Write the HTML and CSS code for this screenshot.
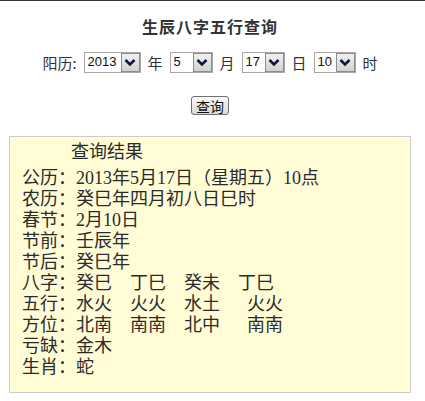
FILE: index.html
```html
<!DOCTYPE html>
<html lang="zh-CN">
<head>
<meta charset="utf-8">
<title>生辰八字五行查询</title>
<link rel="stylesheet" href="styles.css">
</head>
<body>
<div class="page">
  <h1 class="title">生辰八字五行查询</h1>
  <form class="query">
    <div class="row">
      <span class="label">阳历:</span>
      <span class="sel w57">
        <select><option>2013</option></select>
        <span class="arrow"><svg width="12" height="9" viewBox="0 0 12 9"><path d="M1.5 2 L6 6.5 L10.5 2" fill="none" stroke="#0d1840" stroke-width="2.6"/></svg></span>
      </span>
      <span class="label">年</span>
      <span class="sel w43">
        <select><option>5</option></select>
        <span class="arrow"><svg width="12" height="9" viewBox="0 0 12 9"><path d="M1.5 2 L6 6.5 L10.5 2" fill="none" stroke="#0d1840" stroke-width="2.6"/></svg></span>
      </span>
      <span class="label">月</span>
      <span class="sel w43">
        <select><option>17</option></select>
        <span class="arrow"><svg width="12" height="9" viewBox="0 0 12 9"><path d="M1.5 2 L6 6.5 L10.5 2" fill="none" stroke="#0d1840" stroke-width="2.6"/></svg></span>
      </span>
      <span class="label">日</span>
      <span class="sel w42">
        <select><option>10</option></select>
        <span class="arrow"><svg width="12" height="9" viewBox="0 0 12 9"><path d="M1.5 2 L6 6.5 L10.5 2" fill="none" stroke="#0d1840" stroke-width="2.6"/></svg></span>
      </span>
      <span class="label">时</span>
    </div>
    <div class="btnrow">
      <button type="button" class="btn">查询</button>
    </div>
  </form>
  <div class="result">
    <div class="heading">查询结果</div>
    <div class="line">公历：2013年5月17日（星期五）10点</div>
    <div class="line">农历：癸巳年四月初八日巳时</div>
    <div class="line">春节：2月10日</div>
    <div class="line">节前：壬辰年</div>
    <div class="line">节后：癸巳年</div>
    <div class="line">八字：癸巳　丁巳　癸未　丁巳</div>
    <div class="line">五行：水火　火火　水土　&nbsp;&nbsp;火火</div>
    <div class="line">方位：北南　南南　北中　&nbsp;&nbsp;南南</div>
    <div class="line">亏缺：金木</div>
    <div class="line">生肖：蛇</div>
  </div>
</div>
</body>
</html>
```

FILE: styles.css
```css
html, body {
  margin: 0;
  padding: 0;
  background: #fff;
}
body {
  border-top: 1px solid #333;
  font-family: "Noto Sans CJK SC", sans-serif;
  color: #333;
}
.page {
  width: 402px;
  margin-left: 9px;
}
.title {
  margin: 15px 0 0;
  font-size: 16px;
  line-height: 20px;
  font-weight: bold;
  letter-spacing: 1px;
  text-align: center;
  color: #333;
}
.query {
  margin: 0;
}
.row {
  margin-top: 16px;
  height: 21px;
  display: flex;
  justify-content: center;
  align-items: center;
  gap: 7px;
}
.label {
  font-size: 15px;
  line-height: 21px;
  color: #333;
}
.sel {
  position: relative;
  display: inline-block;
  height: 21px;
  box-sizing: border-box;
  border: 1px solid #a7a7a7;
  background: #fff;
}
.w57 { width: 57px; }
.w43 { width: 43px; }
.w42 { width: 42px; }
.sel select {
  -webkit-appearance: none;
  appearance: none;
  display: block;
  box-sizing: border-box;
  border: none;
  outline: none;
  background: transparent;
  width: 100%;
  height: 19px;
  margin: 0;
  padding: 0 0 2px 3px;
  line-height: 17px;
  font-family: "Liberation Sans", sans-serif;
  font-size: 13px;
  color: #111;
}
.arrow {
  position: absolute;
  top: 0;
  right: 0;
  width: 19px;
  height: 19px;
  box-sizing: border-box;
  border: 1px solid #8c8c8c;
  background: linear-gradient(#f0f0f0, #d2d2d2);
  display: flex;
  align-items: center;
  justify-content: center;
  pointer-events: none;
}
.btnrow {
  margin-top: 23px;
  text-align: center;
  height: 19px;
}
.btn {
  width: 38px;
  height: 19px;
  box-sizing: border-box;
  padding: 0;
  border: 1px solid #707070;
  border-radius: 3px;
  background: linear-gradient(#fafafa, #d9d9d9);
  font-family: "Noto Sans CJK SC", sans-serif;
  font-size: 14px;
  line-height: 16px;
  color: #111;
  vertical-align: top;
}
.result {
  margin-top: 21px;
  box-sizing: border-box;
  height: 257px;
  border: 1px solid #cccccc;
  background: #fffcd6;
  padding: 5px 0 0 12px;
  font-family: "Liberation Serif", "Noto Sans CJK SC", serif;
  font-size: 18px;
  color: #2b2b2b;
}
.heading {
  margin-left: 49px;
  line-height: 21px;
  margin-bottom: 5px;
}
.line {
  line-height: 21px;
  white-space: nowrap;
}
```
